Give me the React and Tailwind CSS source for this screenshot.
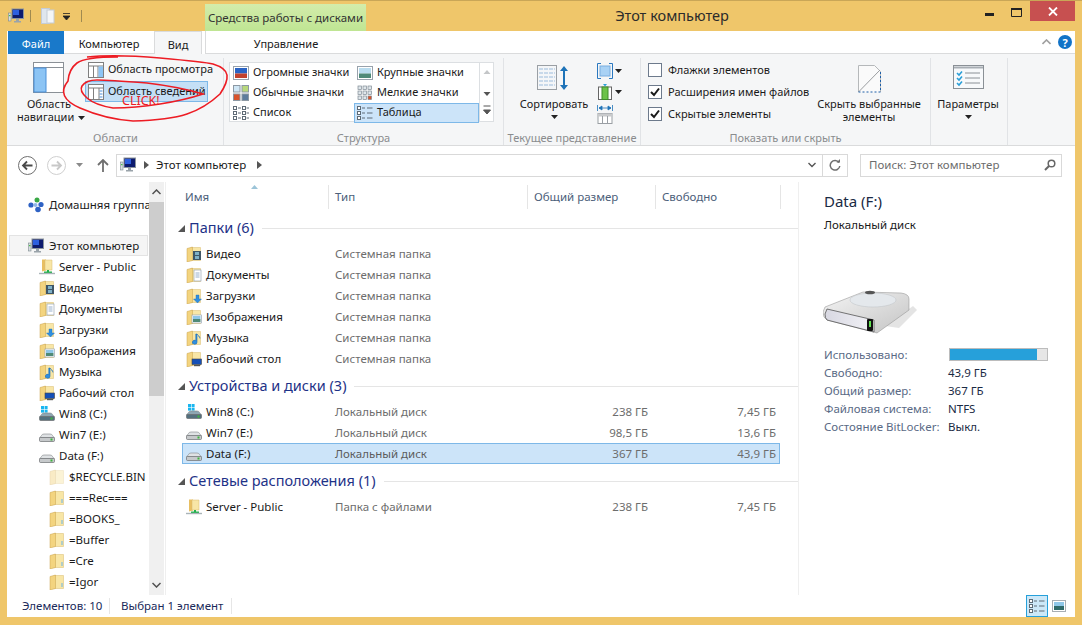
const Caret = ({ className = "" }) => (
  <svg width="7" height="4" viewBox="0 0 7 4" className={className}>
    <path d="M0 0h7L3.500 4z" fill="#222" />
  </svg>
);

const Monitor = ({ size = 16 }) => (
  <svg width={size} height={size} viewBox="0 0 16 16" className="shrink-0">
    <rect x="0.500" y="5" width="2.500" height="8" fill="#d8dde0" stroke="#7d8b8f" strokeWidth="0.600" />
    <rect x="1" y="7" width="1.500" height="1.200" fill="#4bc24b" />
    <rect x="4" y="1" width="11.500" height="9.500" fill="#0d1b6e" stroke="#8b949c" />
    <rect x="5" y="2" width="6" height="5" fill="#2d5fe0" />
    <path d="M8 11h3v2h2v1.500H6V13h2z" fill="#9aa3aa" />
  </svg>
);

const Folder = ({ badge, faded }) => (
  <svg width="16" height="16" viewBox="0 0 16 16" className={`shrink-0 ${faded ? "opacity-45" : ""}`}>
    <path d="M5 1.500h9.500V14.500H5z" fill="#f8e6a6" stroke="#d8bb6c" strokeWidth="0.500" />
    <path d="M1 2.500L6.500 1v13.500L1 16z" fill="#f3d47f" stroke="#c9a24f" strokeWidth="0.500" />
    {badge === "video" && (
      <g>
        <rect x="7" y="5" width="8" height="9" fill="#3f5667" />
        <rect x="9" y="6" width="4" height="3" fill="#7fb1c8" />
        <rect x="9" y="10" width="4" height="3" fill="#7fb1c8" />
      </g>
    )}
    {badge === "docs" && (
      <g>
        <rect x="8" y="3" width="7" height="11" fill="#fff" stroke="#9aa7b4" strokeWidth="0.700" />
        <path d="M9.500 6h4M9.500 8h4M9.500 10h4" stroke="#7f9cc0" strokeWidth="0.800" />
      </g>
    )}
    {badge === "down" && <path d="M10 7h3v4h2.500l-4 4-4-4H10z" fill="#2f8fe0" stroke="#1c6cb5" strokeWidth="0.400" />}
    {badge === "pics" && (
      <g>
        <rect x="6" y="6" width="9.500" height="8" fill="#fff" stroke="#9aa7b4" strokeWidth="0.700" />
        <rect x="7" y="7" width="7.500" height="3" fill="#8fc7e8" />
        <rect x="7" y="10" width="7.500" height="3" fill="#4f8a78" />
      </g>
    )}
    {badge === "music" && <path d="M11 4v8.200a2.300 2 0 1 1-1.200-1.700V4zM11 4c1 2 3 2 3 4.500" fill="#2f8fe0" stroke="#1c6cb5" strokeWidth="0.600" />}
    {badge === "desk" && (
      <g>
        <rect x="6" y="8" width="9.500" height="5.500" fill="#1550b8" stroke="#444" strokeWidth="0.600" />
        <rect x="8" y="14" width="6" height="1.200" fill="#555" />
      </g>
    )}
    {badge === "sub" && <rect x="12.500" y="9" width="1" height="4" fill="#6ab4e8" />}
  </svg>
);

const NetFolder = () => (
  <svg width="16" height="16" viewBox="0 0 16 16" className="shrink-0">
    <path d="M3 0.500h4v11l-4 1z" fill="#e8bf62" />
    <path d="M6 1h7v10H6z" fill="#f8e6a6" stroke="#d8bb6c" strokeWidth="0.500" />
    <path d="M8 11h2v2H8z" fill="#22b14c" />
    <path d="M5 12.500h8v1.500H5z" fill="#22b14c" />
    <path d="M0 14.500h16" stroke="#a9b4b8" strokeWidth="1.400" />
  </svg>
);

const Drive = ({ win }) => (
  <svg width="16" height="16" viewBox="0 0 16 16" className="shrink-0">
    {win && (
      <g fill="#19b6f0">
        <rect x="2" y="0" width="3" height="3" />
        <rect x="5.600" y="0" width="3" height="3" />
        <rect x="2" y="3.600" width="3" height="3" />
        <rect x="5.600" y="3.600" width="3" height="3" />
      </g>
    )}
    <path d="M2.500 8.500Q3 7 5 7h6q2 0 2.500 1.500L15.500 11H.5z" fill={win ? "#8ea6b2" : "#dfe2e4"} stroke="#7f8486" strokeWidth="0.600" />
    <rect x="0.500" y="10.500" width="15" height="4" rx="1" fill={win ? "#54707e" : "#c6c9cb"} stroke="#6b6f71" strokeWidth="0.700" />
    <rect x="11.500" y="11.500" width="2" height="2" fill="#3db53d" />
  </svg>
);

const HomeGroup = () => (
  <svg width="16" height="16" viewBox="0 0 16 16" className="shrink-0">
    <circle cx="9" cy="3" r="2.500" fill="#39a845" />
    <circle cx="3" cy="8" r="2.600" fill="#2e62c4" />
    <circle cx="13" cy="7.500" r="2.600" fill="#2e62c4" />
    <circle cx="10" cy="12.500" r="2.800" fill="#2e62c4" />
    <circle cx="7.500" cy="8" r="2" fill="#8fb6e8" />
  </svg>
);

// small ribbon glyphs
const PaneIcon = ({ details }) => (
  <svg width="16" height="16" viewBox="0 0 16 16" className="shrink-0">
    <rect x="0.500" y="0.500" width="15" height="15" fill="#fff" stroke="#7f7f7f" />
    <path d="M0.500 4h15" stroke="#7f7f7f" />
    {details ? <path d="M5.500 4v11.500M11 4v11.500" stroke="#7f7f7f" /> : <path d="M5.500 4v11.500M10 4v11.500" stroke="#7f7f7f" />}
    {details ? (
      <path d="M11.500 7h3M11.500 10h3M11.500 13h3" stroke="#4a90d9" />
    ) : (
      <rect x="10.500" y="4.500" width="4.500" height="10.500" fill="#8cc4f4" />
    )}
  </svg>
);

const GalleryIcon = ({ kind }) => {
  if (kind === "huge" || kind === "large") {
    return (
      <svg width="16" height="16" viewBox="0 0 16 16" className="shrink-0">
        <rect x="0.500" y="1.500" width="15" height="13" fill="#fff" stroke="#98a2ac" />
        <rect x="2" y="3" width="12" height="5.500" fill={kind === "huge" ? "#2a63c4" : "#b9dcef"} />
        <rect x="2" y="8.500" width="12" height="4.500" fill={kind === "huge" ? "#c2412d" : "#4f8a78"} />
      </svg>
    );
  }
  if (kind === "normal") {
    return (
      <svg width="16" height="16" viewBox="0 0 16 16" className="shrink-0">
        <rect x="0.500" y="0.500" width="6.500" height="6.500" fill="#cfe6f5" stroke="#8c98a3" />
        <rect x="9" y="0.500" width="6.500" height="6.500" fill="#b8d87c" stroke="#8c98a3" />
        <rect x="0.500" y="9" width="6.500" height="6.500" fill="#d9532c" stroke="#8c98a3" />
        <rect x="9" y="9" width="6.500" height="6.500" fill="#5d7c9c" stroke="#8c98a3" />
      </svg>
    );
  }
  if (kind === "small") {
    return (
      <svg width="16" height="16" viewBox="0 0 16 16" className="shrink-0">
        {[1, 6, 11].map((y) =>
          [1, 6, 11].map((x) => (
            <rect key={`${x}-${y}`} x={x} y={y} width="3.500" height="3.500" fill={x === 11 && y === 11 ? "#d9532c" : "#dfe6ea"} stroke="#7f8a94" strokeWidth="0.700" />
          ))
        )}
      </svg>
    );
  }
  return (
    <svg width="16" height="16" viewBox="0 0 16 16" className="shrink-0">
      {[1.500, 6.500, 11.500].map((y) => (
        <g key={y} stroke="#5f6b76" fill="#fff">
          <rect x="0.500" y={y} width="3" height="3" />
          <path d={`M5 ${y + 1.500}h3`} />
          {kind === "list" && <rect x="9.500" y={y} width="3" height="3" />}
          <path d={kind === "list" ? `M13.500 ${y + 1.500}h2.500` : `M10 ${y + 1.500}h5.500`} />
        </g>
      ))}
    </svg>
  );
};

const Check = ({ checked }) => (
  <span className="flex h-[14px] w-[14px] shrink-0 items-center justify-center border border-[#6d7a8c] bg-white">
    {checked && (
      <svg width="10" height="10" viewBox="0 0 10 10">
        <path d="M1 5l3 3 5-6.500" fill="none" stroke="#1a1a1a" strokeWidth="2" />
      </svg>
    )}
  </span>
);

const Group = ({ width, label, children }) => (
  <div className={`flex h-full shrink-0 flex-col border-r border-[#e1e3e6] ${width}`}>
    <div className="flex min-h-0 flex-1">{children}</div>
    <div className="h-[15px] text-center text-[11px] leading-[16px] whitespace-nowrap text-[#8a8c8e]">{label}</div>
  </div>
);

const BigButton = ({ icon, lines, caret, className = "" }) => (
  <div className={`flex flex-col items-center text-[11px] leading-[13px] ${className}`}>
    <div className="flex h-[33px] items-start pt-[1px]">{icon}</div>
    {lines.map((l) => (
      <div key={l} className="whitespace-nowrap">{l}</div>
    ))}
    {caret && <Caret className="mt-[5px]" />}
  </div>
);

const Ribbon = () => (
  <div className="flex h-[92px] border-b border-[#dadbdc] bg-[#f5f6f7] pt-[4px] pl-px">
    <Group width="w-[216px]" label="Области">
      <div className="ml-[9px] w-[64px] pt-[4px] text-center text-[11px] leading-[13px]">
        <div className="ml-[16px] h-[34px] w-[31px]">
          <svg width="31" height="31" viewBox="0 0 31 31">
            <rect x="0.500" y="0.500" width="30" height="30" fill="#fff" stroke="#8a9096" />
            <path d="M0.500 5.500h30" stroke="#8a9096" />
            <rect x="1" y="6" width="12" height="24" fill="#8cc4f4" stroke="#4a90d9" />
          </svg>
        </div>
        <div className="mt-px">Область</div>
        <div className="whitespace-nowrap">навигации <Caret className="ml-px inline align-middle" /></div>
      </div>
      <div className="ml-[4px] flex w-[123px] flex-col pt-[2px] text-[11px]">
        <div className="flex h-[21px] items-center gap-[4px] pb-[2px] pl-[3px] whitespace-nowrap">
          <PaneIcon />
          Область просмотра
        </div>
        <div className="flex h-[21px] items-center gap-[4px] border border-[#7db8e8] bg-[#c4dff6] pl-[2px] whitespace-nowrap">
          <PaneIcon details />
          Область сведений
        </div>
      </div>
    </Group>
    <Group width="w-[280px]" label="Структура">
      <div className="mt-[4px] ml-[5px] flex h-[60px] w-[265px] border border-[#dcdfe2] bg-white text-[11px]">
        <div className="w-[124px]">
          {[["huge", "Огромные значки"], ["normal", "Обычные значки"], ["list", "Список"]].map(([k, t]) => (
            <div key={k} className="flex h-[20px] items-center gap-[4px] pb-px pl-[3px] whitespace-nowrap">
              <GalleryIcon kind={k} />
              {t}
            </div>
          ))}
        </div>
        <div className="w-[125px]">
          {[["large", "Крупные значки"], ["small", "Мелкие значки"]].map(([k, t]) => (
            <div key={k} className="flex h-[20px] items-center gap-[4px] pb-px pl-[3px] whitespace-nowrap">
              <GalleryIcon kind={k} />
              {t}
            </div>
          ))}
          <div className="flex h-[20px] items-center gap-[4px] border border-[#7db8e8] bg-[#cce4f9] pb-px pl-[2px] whitespace-nowrap">
            <GalleryIcon kind="table" />
            Таблица
          </div>
        </div>
        <div className="flex flex-1 flex-col items-center border-l border-[#dcdfe2]">
          <svg width="8" height="20" viewBox="0 0 8 20"><path d="M4 7l3.500 4h-7z" fill="#c4c6c8" /></svg>
          <svg width="8" height="20" viewBox="0 0 8 20"><path d="M.5 9h7L4 13z" fill="#555" /></svg>
          <svg width="8" height="18" viewBox="0 0 8 18"><path d="M.5 3h7M.5 7h7L4 11z" stroke="#555" fill="#555" /></svg>
        </div>
      </div>
    </Group>
    <Group width="w-[137px]" label="Текущее представление">
      <BigButton
        className="ml-[15px] w-[70px] pt-[6px]"
        caret
        lines={["Сортировать"]}
        icon={
          <svg width="34" height="26" viewBox="0 0 34 26">
            <rect x="0.500" y="0.500" width="19" height="24" fill="#f4f6f8" stroke="#9a9fa4" />
            <path d="M2 4h16M2 8h16M2 12h16M2 16h16M2 20h16" stroke="#9cbcdc" strokeDasharray="4 1" />
            <path d="M27 1l4 5h-3v14h3l-4 5-4-5h3V6h-3z" fill="#1e73b8" />
          </svg>
        }
      />
      <div className="ml-[8px] flex flex-col gap-[5px] pt-[5px]">
        <div className="flex items-center gap-[2px]">
          <svg width="16" height="16" viewBox="0 0 16 16">
            <path d="M4 .5H.5v15H4M12 .5h3.500v15H12" fill="none" stroke="#2a78c0" />
            <rect x="3" y="3" width="10" height="10" fill="#a9d2f5" stroke="#7aaee0" />
          </svg>
          <Caret />
        </div>
        <div className="flex items-center gap-[2px]">
          <svg width="16" height="16" viewBox="0 0 16 16">
            <rect x="1.500" y="3" width="13" height="12.500" fill="#fff" stroke="#666" />
            <rect x="5" y="3" width="6" height="12.500" fill="#6cc24a" stroke="#3e8e2a" />
            <path d="M6 0h4L8 2.500z" fill="#2a9fd8" />
          </svg>
          <Caret />
        </div>
        <svg width="16" height="19" viewBox="0 0 16 19">
          <path d="M.5 0v6M15.500 0v6M2 3h12M2 3l3-2v4zM14 3l-3-2v4z" stroke="#1e73b8" fill="#1e73b8" strokeWidth="0.800" />
          <rect x="1" y="8.500" width="14" height="10" fill="#fff" stroke="#9a9fa4" />
          <rect x="1" y="8.500" width="14" height="3" fill="#c8cacc" />
          <path d="M5.500 11v7M10.500 11v7" stroke="#9a9fa4" />
        </svg>
      </div>
    </Group>
    <Group width="w-[290px]" label="Показать или скрыть">
      <div className="ml-[7px] flex w-[170px] flex-col pt-px text-[11px]">
        {[["Флажки элементов", false], ["Расширения имен файлов", true], ["Скрытые элементы", true]].map(([t, c]) => (
          <div key={t} className="flex h-[22px] items-center gap-[6px] whitespace-nowrap">
            <Check checked={c} />
            {t}
          </div>
        ))}
      </div>
      <BigButton
        className="w-[102px] pt-[6px]"
        lines={["Скрыть выбранные", "элементы"]}
        icon={
          <svg width="23" height="28" viewBox="0 0 23 28">
            <path d="M.5 27V.500h16l6 6V27" fill="#fafafa" stroke="#b5b8ba" />
            <path d="M.5 27L22 5" stroke="#9a9da0" />
            <path d="M.5 27h22V7" fill="none" stroke="#1e5fa8" strokeDasharray="2 2" />
          </svg>
        }
      />
    </Group>
    <Group width="w-[77px]" label="">
      <BigButton
        className="w-[74px] pt-[6px]"
        caret
        lines={["Параметры"]}
        icon={
          <svg width="31" height="25" viewBox="0 0 31 25">
            <rect x="0.500" y="0.500" width="30" height="23" fill="#f7f9fb" stroke="#8a9096" />
            <path d="M1 2.500h29" stroke="#a8aeb4" strokeWidth="2" />
            <path d="M4 8l2 2 3-3.500M4 13l2 2 3-3.500M4 18l2 2 3-3.500" fill="none" stroke="#2a9fd8" strokeWidth="1.600" />
            <path d="M12 8h15M12 13h15M12 18h15" stroke="#8a9096" />
          </svg>
        }
      />
    </Group>
  </div>
);

const AddressBar = () => (
  <div className="flex h-[36px] items-center bg-white pt-[2px] pl-[11px]">
    <svg width="19" height="19" viewBox="0 0 19 19" className="shrink-0">
      <circle cx="9.500" cy="9.500" r="9" fill="#fff" stroke="#6f6f6f" />
      <path d="M14.500 9.500h-9M9 5.500l-4 4 4 4" fill="none" stroke="#4a4a4a" strokeWidth="1.800" />
    </svg>
    <svg width="19" height="19" viewBox="0 0 19 19" className="ml-[10px] shrink-0">
      <circle cx="9.500" cy="9.500" r="9" fill="#fff" stroke="#cfcfcf" />
      <path d="M4.500 9.500h9M10 5.500l4 4-4 4" fill="none" stroke="#c8c8c8" strokeWidth="1.800" />
    </svg>
    <svg width="7" height="4" viewBox="0 0 7 4" className="ml-[10px] shrink-0"><path d="M0 0h7L3.500 4z" fill="#8a8a8a" /></svg>
    <svg width="12" height="13" viewBox="0 0 12 13" className="ml-[14px] shrink-0">
      <path d="M6 1v12M1 6l5-5 5 5" fill="none" stroke="#6f6f6f" strokeWidth="1.800" />
    </svg>
    <div className="ml-[7px] flex h-[23px] w-[732px] items-center border border-[#d9d9d9] pl-[3px] text-[11.5px]">
      <Monitor />
      <svg width="5" height="8" viewBox="0 0 5 8" className="ml-[8px] shrink-0"><path d="M0 0l5 4-5 4z" fill="#555" /></svg>
      <span className="ml-[7px]">Этот компьютер</span>
      <svg width="5" height="8" viewBox="0 0 5 8" className="ml-[11px] shrink-0"><path d="M0 0l5 4-5 4z" fill="#555" /></svg>
      <div className="ml-auto flex h-full items-center">
        <svg width="8" height="6" viewBox="0 0 8 6" className="mr-[6px]"><path d="M.5 1l3.500 3.500L7.500 1" fill="none" stroke="#555" strokeWidth="1.400" /></svg>
        <div className="flex h-full w-[25px] items-center justify-center border-l border-[#d9d9d9]">
          <svg width="12" height="12" viewBox="0 0 12 12">
            <path d="M10 3.500A4.800 4.800 0 1 0 10.800 7" fill="none" stroke="#6f6f6f" strokeWidth="1.500" />
            <path d="M7.500 3.500h3.500V0z" fill="#6f6f6f" />
          </svg>
        </div>
      </div>
    </div>
    <div className="ml-[12px] flex h-[23px] w-[202px] items-center justify-between border border-[#d9d9d9] pr-[5px] pl-[8px] text-[11.5px] text-[#6d6d6d]">
      Поиск: Этот компьютер
      <svg width="12" height="12" viewBox="0 0 12 12">
        <circle cx="7.500" cy="4.500" r="3.300" fill="none" stroke="#666" strokeWidth="1.500" />
        <path d="M5 7l-4 4" stroke="#666" strokeWidth="2" />
      </svg>
    </div>
  </div>
);

const treeItems = [
  [1, <NetFolder />, "Server - Public"],
  [1, <Folder badge="video" />, "Видео"],
  [1, <Folder badge="docs" />, "Документы"],
  [1, <Folder badge="down" />, "Загрузки"],
  [1, <Folder badge="pics" />, "Изображения"],
  [1, <Folder badge="music" />, "Музыка"],
  [1, <Folder badge="desk" />, "Рабочий стол"],
  [1, <Drive win />, "Win8 (C:)"],
  [1, <Drive />, "Win7 (E:)"],
  [1, <Drive />, "Data (F:)"],
  [2, <Folder faded />, "$RECYCLE.BIN"],
  [2, <Folder badge="sub" />, "===Rec==="],
  [2, <Folder badge="sub" />, "=BOOKS_"],
  [2, <Folder badge="sub" />, "=Buffer"],
  [2, <Folder badge="sub" />, "=Cre"],
  [2, <Folder badge="sub" />, "=Igor"],
];

const Tree = () => (
  <div className="flex w-[158px] shrink-0 text-[11.5px]">
    <div className="w-[142px] shrink-0 overflow-hidden pt-[12px]">
      <div className="flex h-[21px] items-center gap-[5px] pl-[21px] whitespace-nowrap">
        <HomeGroup />
        Домашняя группа
      </div>
      <div className="mt-[20px] ml-[2px] flex h-[21px] w-[139px] items-center gap-[5px] border border-[#e3e3e3] bg-[#f5f5f5] pl-[18px] whitespace-nowrap">
        <Monitor />
        Этот компьютер
      </div>
      {treeItems.map(([lvl, icon, text]) => (
        <div
          key={text}
          className={`flex h-[21px] items-center gap-[4px] whitespace-nowrap ${lvl === 1 ? "pl-[32px]" : "pl-[42px]"}`}
        >
          {icon}
          {text}
        </div>
      ))}
    </div>
    <div className="flex w-[15px] shrink-0 flex-col bg-[#f0f0f0]">
      <div className="flex h-[20px] items-center justify-center">
        <svg width="9" height="6" viewBox="0 0 9 6"><path d="M.5 5l4-4 4 4" fill="none" stroke="#505050" strokeWidth="1.500" /></svg>
      </div>
      <div className="h-[194px] bg-[#cdcdcd]" />
      <div className="mt-auto flex h-[20px] items-center justify-center">
        <svg width="9" height="6" viewBox="0 0 9 6"><path d="M.5 1l4 4 4-4" fill="none" stroke="#505050" strokeWidth="1.500" /></svg>
      </div>
    </div>
  </div>
);

const GroupHead = ({ title }) => (
  <div className="mt-[5px] mb-[3px] flex h-[24px] items-center pl-[11px]">
    <svg width="7" height="7" viewBox="0 0 7 7" className="shrink-0"><path d="M7 0v7H0z" fill="#555" /></svg>
    <span className="ml-[4px] text-[14.500px] whitespace-nowrap text-[#1e3287]">{title}</span>
    <div className="ml-[8px] h-px flex-1 bg-[#e5e5e5]" />
  </div>
);

const Row = ({ icon, name, type, size, free, selected }) => (
  <div
    className={`ml-[15px] flex h-[21px] w-[598px] items-center border pl-[3px] text-[11.5px] whitespace-nowrap ${
      selected ? "border-[#7db8e8] bg-[#cce4f9]" : "border-transparent"
    }`}
  >
    <div className="flex w-[149px] items-center gap-[4px]">
      {icon}
      {name}
    </div>
    <div className={`w-[200px] ${selected ? "text-[#5c5c5c]" : "text-[#6d6d6d]"}`}>{type}</div>
    <div className="w-[113px] text-right text-[#6d6d6d]">{size}</div>
    <div className="w-[128px] text-right text-[#6d6d6d]">{free}</div>
  </div>
);

const FileList = () => (
  <div className="w-[633px] shrink-0 border-l border-[#efefef] pl-px">
    <div className="relative mt-[3px] mb-[7px] flex h-[24px] items-center pl-[12px] text-[11.5px] text-[#4c607a]">
      <svg width="7" height="4" viewBox="0 0 7 4" className="absolute top-0 left-[84px]"><path d="M0 4l3.500-4L7 4z" fill="#9cc4d8" /></svg>
      <div className="flex h-full w-[150px] items-center border-r border-[#e5e5e5] pl-[6px]">Имя</div>
      <div className="flex h-full w-[199px] items-center border-r border-[#e5e5e5] pl-[6px]">Тип</div>
      <div className="flex h-full w-[128px] items-center border-r border-[#e5e5e5] pl-[6px]">Общий размер</div>
      <div className="flex h-full w-[125px] items-center border-r border-[#e5e5e5] pl-[6px]">Свободно</div>
    </div>
    <GroupHead title="Папки (6)" />
    <Row icon={<Folder badge="video" />} name="Видео" type="Системная папка" />
    <Row icon={<Folder badge="docs" />} name="Документы" type="Системная папка" />
    <Row icon={<Folder badge="down" />} name="Загрузки" type="Системная папка" />
    <Row icon={<Folder badge="pics" />} name="Изображения" type="Системная папка" />
    <Row icon={<Folder badge="music" />} name="Музыка" type="Системная папка" />
    <Row icon={<Folder badge="desk" />} name="Рабочий стол" type="Системная папка" />
    <GroupHead title="Устройства и диски (3)" />
    <Row icon={<Drive win />} name="Win8 (C:)" type="Локальный диск" size="238 ГБ" free="7,45 ГБ" />
    <Row icon={<Drive />} name="Win7 (E:)" type="Локальный диск" size="98,5 ГБ" free="13,6 ГБ" />
    <Row icon={<Drive />} name="Data (F:)" type="Локальный диск" size="367 ГБ" free="43,9 ГБ" selected />
    <GroupHead title="Сетевые расположения (1)" />
    <Row icon={<NetFolder />} name="Server - Public" type="Папка с файлами" size="238 ГБ" free="7,45 ГБ" />
  </div>
);

const detailRows = [
  ["Свободно:", "43,9 ГБ"],
  ["Общий размер:", "367 ГБ"],
  ["Файловая система:", "NTFS"],
  ["Состояние BitLocker:", "Выкл."],
];

const Details = () => (
  <div className="flex-1 border-l border-[#efefef] pt-[9px] pl-[25px] text-[11.5px]">
    <div className="text-[15px] leading-[20px] text-[#1a2a44]">Data (F:)</div>
    <div className="mt-[6px] leading-[16px]">Локальный диск</div>
    <svg width="94" height="44" viewBox="0 0 94 44" className="mt-[57px] -ml-px">
      <defs>
        <linearGradient id="hddTop" x1="0" y1="0" x2="1" y2="1">
          <stop offset="0" stopColor="#f4f4f4" />
          <stop offset="1" stopColor="#c4c4c4" />
        </linearGradient>
        <linearGradient id="hddFront" x1="0" y1="0" x2="1" y2="0">
          <stop offset="0" stopColor="#d8d8e2" />
          <stop offset="1" stopColor="#f2f2f6" />
        </linearGradient>
      </defs>
      <path d="M90 16l4 4-18 18-14-2z" fill="#bbb" opacity="0.400" />
      <path d="M2 17L40 2l38 1q8 1 8 6v11L54 43 4 30Q0 28 0 22z" fill="url(#hddTop)" stroke="#8a8a8a" strokeWidth="0.500" />
      <ellipse cx="50" cy="10" rx="23" ry="7" fill="#e4e8ec" stroke="#bcc0c4" strokeWidth="0.500" />
      <ellipse cx="47" cy="2.500" rx="5" ry="1.800" fill="#555" />
      <path d="M4 19L51 30v12L4 30Q2 28 2 24z" fill="url(#hddFront)" stroke="#555" strokeWidth="0.800" />
      <rect x="44" y="29" width="6" height="12" rx="1" fill="#111" />
      <rect x="46" y="31" width="2" height="6" fill="#5fe04f" />
    </svg>
    <div className="mt-[12px] flex h-[18px] items-center">
      <div className="w-[125px] text-[#5a6a85]">Использовано:</div>
      <div className="mb-[2px] h-[13px] w-[99px] border border-[#bcbcbc] bg-[#e6e6e6]">
        <div className="h-full w-[87px] bg-[#26a0da]" />
      </div>
    </div>
    {detailRows.map(([k, v]) => (
      <div key={k} className="flex h-[18px] items-center">
        <div className="w-[124px] whitespace-nowrap text-[#5a6a85]">{k}</div>
        <div className="text-[#1a2a44]">{v}</div>
      </div>
    ))}
  </div>
);

const StatusBar = () => (
  <div className="flex h-[22px] items-center bg-white pl-[15px] text-[11.5px] text-[#1a2a5a]">
    <span className="w-[88px] border-r border-[#e6e6e6] leading-[16px]">Элементов: 10</span>
    <span className="ml-[11px] w-[111px] border-r border-[#e6e6e6] leading-[16px] whitespace-nowrap">Выбран 1 элемент</span>
    <div className="mr-[9px] ml-auto flex items-center gap-[4px]">
      <div className="flex h-[22px] w-[22px] items-center justify-center border border-[#26a0da] bg-[#cce8f8]">
        <GalleryIcon kind="table" />
      </div>
      <svg width="14" height="12" viewBox="0 0 14 12">
        <rect x="0.500" y="0.500" width="13" height="11" fill="#fff" stroke="#a8aeb4" />
        <rect x="2" y="2" width="10" height="4" fill="#8fc7e8" />
        <rect x="2" y="6" width="10" height="4" fill="#2f6a6a" />
      </svg>
    </div>
  </div>
);

const App = () => (
  <div className="relative h-[625px] w-[1082px] overflow-hidden border-t border-[#c9a657] bg-[#efc66a] font-['Noto_Sans','Open_Sans',sans-serif] text-[#1a1a1a]">
    <div className="flex h-[30px] items-start">
      <div className="ml-[8px] flex h-[30px] items-center">
        <Monitor />
        <div className="ml-[6px] h-[12px] w-px bg-[#a08a50]" />
        <svg width="14" height="16" viewBox="0 0 14 16" className="ml-[10px]">
          <rect x="0.500" y="0.500" width="8" height="15" fill="#dfe6ee" stroke="#c4ccd6" />
          <rect x="6" y="2" width="7" height="13" fill="#f4f6f8" stroke="#c4ccd6" />
        </svg>
        <svg width="7" height="7" viewBox="0 0 7 7" className="ml-[8px]"><path d="M0 .5h7M0 3h7L3.500 7z" stroke="#222" strokeWidth="0.800" fill="#222" /></svg>
        <div className="ml-[11px] h-[12px] w-px bg-[#a08a50]" />
      </div>
      <div className="mt-[3px] ml-[123px] flex h-[27px] w-[161px] items-center justify-center bg-[linear-gradient(#d3ecab,#bfe593)] text-[11.5px] whitespace-nowrap text-[#333]">
        Средства работы с дисками
      </div>
      <div className="mt-[4px] ml-[249px] w-[114px] text-center text-[14.500px] whitespace-nowrap text-[#2b2b2b]">Этот компьютер</div>
      <div className="ml-auto flex items-start">
        <svg width="9" height="3" viewBox="0 0 9 3" className="mt-[12px] mr-[17px]"><rect width="9" height="3" fill="#222" /></svg>
        <svg width="11" height="9" viewBox="0 0 11 9" className="mt-[7px] mr-[8px]"><path d="M.5 1h10v7.500H.5z" fill="none" stroke="#222" /><rect width="11" height="2" fill="#222" /></svg>
        <div className="mr-[7px] flex h-[20px] w-[45px] items-center justify-center bg-[#c75050]">
          <svg width="10" height="9" viewBox="0 0 10 9"><path d="M1 .5l8 8M9 .5l-8 8" stroke="#fff" strokeWidth="1.800" /></svg>
        </div>
      </div>
    </div>
    <div className="mx-[7px] flex h-[586px] flex-col bg-white">
      <div className="flex h-[23px] items-stretch bg-white text-[11px]">
        <div className="ml-px flex w-[56px] items-center justify-center bg-[#1979ca] pt-[4px] text-white">Файл</div>
        <div className="flex w-[90px] items-center justify-center border-b border-[#dadbdc] pt-[4px]">Компьютер</div>
        <div className="flex w-[48px] items-center justify-center border-x border-t border-[#dadbdc] bg-[#f5f6f7] pt-[4px]">Вид</div>
        <div className="ml-[3px] flex w-[161px] items-center justify-center border-b border-l border-[#dadbdc] pt-[4px]">Управление</div>
        <div className="flex flex-1 items-center justify-end gap-[7px] border-b border-[#dadbdc] pr-[3px]">
          <svg width="9" height="6" viewBox="0 0 9 6"><path d="M.5 5l4-4 4 4" fill="none" stroke="#a0a0a0" strokeWidth="1.600" /></svg>
          <div className="flex h-[14px] w-[14px] items-center justify-center rounded-full bg-[#1173c7] text-[11px] leading-none font-bold text-white">?</div>
        </div>
      </div>
      <Ribbon />
      <AddressBar />
      <div className="flex min-h-0 flex-1">
        <Tree />
        <FileList />
        <Details />
      </div>
      <StatusBar />
    </div>
    {/* red marker scribble drawn over the screenshot */}
    <svg width="240" height="80" viewBox="0 0 240 80" className="pointer-events-none absolute top-[50px] left-0">
      <path
        d="M87 6Q115 3 160 7T213 13Q226 17 227 24T220 43Q205 57 187 63T133 70Q105 68 80 57T68 30Q69 18 77 12T118 6"
        fill="none"
        stroke="#ed1c24"
        strokeWidth="1.600"
      />
      <path
        d="M82 35Q86 29 97 29T147 32Q180 36 203 43Q185 49 160 53T113 57Q95 54 87 47T82 35"
        fill="none"
        stroke="#ed1c24"
        strokeWidth="1.600"
      />
    </svg>
    <div className="pointer-events-none absolute top-[92px] left-[122px] text-[12.500px] leading-[16px] text-[#ed1c24]">CLICK!</div>
  </div>
);

export default App;
